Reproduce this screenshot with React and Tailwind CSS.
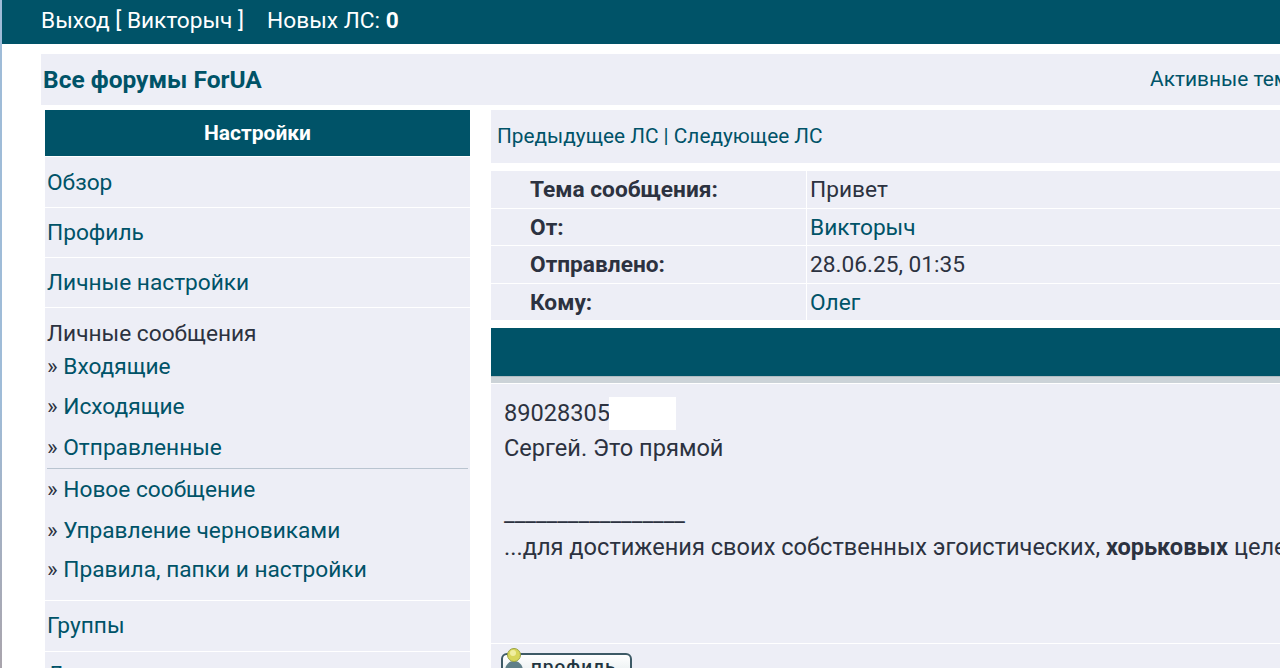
const sideLink = "block text-[#005368]";

function SideRow({ children, className = "" }) {
  return <div className={`bg-[#edeef6] px-[2px] ${className}`}>{children}</div>;
}

function SubLink({ children, className = "" }) {
  return (
    <div className={`text-[#2c3240] whitespace-nowrap ${className}`}>
      » <span className="text-[#005368]">{children}</span>
    </div>
  );
}

function InfoRow({ label, children, h = "h-[37px]" }) {
  return (
    <div className={`flex ${h} mb-px`}>
      <div className="w-[315px] shrink-0 bg-[#edeef6] pl-[39px] pt-[2px] flex items-center font-bold text-[#2c3240]">{label}</div>
      <div className="ml-px flex-1 bg-[#edeef6] pl-[3px] pt-[2px] flex items-center">{children}</div>
    </div>
  );
}

export default function App() {
  return (
    <div className="h-[668px] w-[1280px] overflow-hidden flex bg-white font-['Roboto',sans-serif] text-[22.7px] text-[#2c3240]">
      <div className="w-[2px] shrink-0 bg-gradient-to-b from-[#9fbcd8] from-60% to-[#a9a4ac]" />
      <div className="flex-1 min-w-0">
        <header className="h-[44px] bg-[#005368] text-white flex items-center pl-[39px] pb-[2px] whitespace-nowrap">
          <span>Выход [ Викторыч ]</span>
          <span className="ml-[23px]">Новых ЛС: <b>0</b></span>
        </header>

        <div className="mt-[10px] ml-[39px] h-[51px] bg-[#edeef6] flex items-center justify-between overflow-hidden whitespace-nowrap">
          <h1 className="pl-[2px] pt-[2px] text-[24.5px] font-bold text-[#005368]">Все форумы ForUA</h1>
          <span className="text-[#005368] text-[20.9px] w-[130px] shrink-0 overflow-hidden">Активные темы</span>
        </div>

        <div className="mt-[5px] ml-[43px] flex gap-[21px]">
          <aside className="w-[425px] shrink-0">
            <div className="h-[46px] pt-[2px] bg-[#005368] text-white font-bold text-[21px] flex items-center justify-center mb-px">Настройки</div>
            <SideRow className="h-[50px] pt-[2px] flex items-center mb-px"><a className={sideLink}>Обзор</a></SideRow>
            <SideRow className="h-[49px] pt-[2px] flex items-center mb-px"><a className={sideLink}>Профиль</a></SideRow>
            <SideRow className="h-[49px] pt-[2px] flex items-center mb-px"><a className={sideLink}>Личные настройки</a></SideRow>
            <SideRow className="h-[292px] pt-[12px] mb-px">
              <div className="leading-[28px]">Личные сообщения</div>
              <SubLink className="leading-[28px] mt-[5px]">Входящие</SubLink>
              <SubLink className="leading-[28px] mt-[12px]">Исходящие</SubLink>
              <SubLink className="leading-[28px] mt-[13px]">Отправленные</SubLink>
              <div className="h-px bg-[#b9c4d0] mt-[6px]" />
              <SubLink className="leading-[28px] mt-[7px]">Новое сообщение</SubLink>
              <SubLink className="leading-[28px] mt-[13px]">Управление черновиками</SubLink>
              <SubLink className="leading-[28px] mt-[11px]">Правила, папки и настройки</SubLink>
            </SideRow>
            <SideRow className="h-[50px] flex items-center mb-px"><a className={sideLink}>Группы</a></SideRow>
            <SideRow className="h-[50px] pt-[6px]"><a className={sideLink}>Друзья</a></SideRow>
          </aside>

          <main className="flex-1 min-w-0">
            <div className="h-[53px] bg-[#edeef6] pl-[6px] flex items-center text-[#005368] text-[20.8px] mb-[8px] whitespace-nowrap">
              Предыдущее ЛС | Следующее ЛС
            </div>
            <InfoRow label="Тема сообщения:">Привет</InfoRow>
            <InfoRow label="От:" h="h-[36px]"><a className="text-[#005368]">Викторыч</a></InfoRow>
            <InfoRow label="Отправлено:">28.06.25, 01:35</InfoRow>
            <InfoRow label="Кому:" h="h-[36px]"><a className="text-[#005368]">Олег</a></InfoRow>
            <div className="mt-[8px] h-[48px] bg-[#005368]" />
            <div className="h-[7px] bg-[#ccd3d8] border-t border-[#b0bcc2]" />
            <div className="mt-px h-[259px] bg-[#edeef6] pl-[13px] pt-[13px] text-[23.6px] whitespace-nowrap leading-[33px] overflow-hidden">
              <div className="flex h-[33px]">
                <span>89028305</span>
                <span className="w-[67px] -ml-px bg-white" />
              </div>
              <div className="pt-[2px]">Сергей. Это прямой</div>
              <div className="mt-[32px]">_________________</div>
              <div className="pt-[1px]">...для достижения своих собственных эгоистических, <b>хорьковых</b> целей</div>
            </div>
            <div className="mt-px bg-[#edeef6] pl-[10px] pt-[9px]">
              <ProfileButton />
            </div>
          </main>
        </div>
      </div>
    </div>
  );
}

function ProfileButton() {
  return (
    <div className="relative h-[30px] w-[131px] rounded-t-[6px] border-2 border-[#3d5a66] bg-gradient-to-b from-white to-[#dfe8ea] text-[#1f3540] text-[19px] font-medium tracking-[1px] leading-[24px] pl-[28px]">
      профиль
      <svg className="absolute -left-[2px] -top-[8px]" width="28" height="30" viewBox="0 0 28 30">
        <path d="M4 24c0-6 4-10 9-10s9 4 9 10z" fill="#5f7f88" />
        <circle cx="13" cy="8" r="6.5" fill="#d8d65a" stroke="#9aa344" />
        <circle cx="12" cy="6" r="3" fill="#f0eea0" />
      </svg>
    </div>
  );
}
